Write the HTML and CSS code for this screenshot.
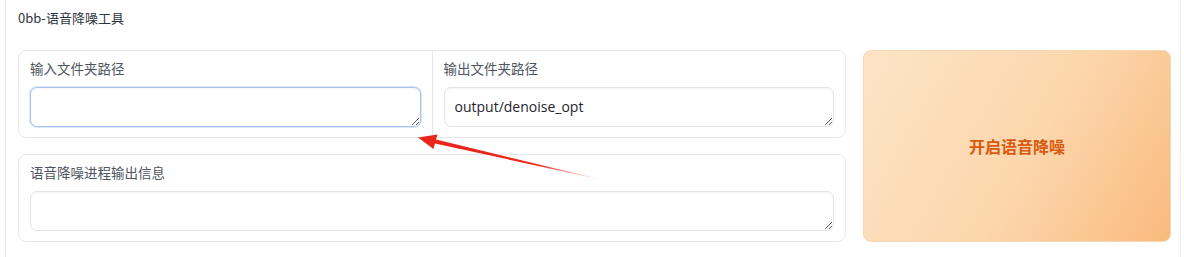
FILE: index.html
```html
<!DOCTYPE html>
<html lang="zh-CN">

<head>
    <meta charset="UTF-8">
    <meta name="viewport" content="width=device-width, initial-scale=1.0">
    <title>0bb-语音降噪工具</title>

    <link rel="stylesheet" href="styles.css">
</head>

<body>
    <div class="panel">
        <div class="title">0bb-语音降噪工具</div>

        <div class="row">
            <div class="fields">
                <!-- 输入 / 输出 两栏 -->
                <div class="group split">
                    <label class="cell">
                        <span class="label">输入文件夹路径</span>
                        <textarea class="box focus" rows="1"></textarea>
                    </label>
                    <label class="cell">
                        <span class="label">输出文件夹路径</span>
                        <textarea class="box" rows="1">output/denoise_opt</textarea>
                    </label>
                </div>

                <!-- 进程输出 -->
                <div class="group">
                    <label class="cell">
                        <span class="label">语音降噪进程输出信息</span>
                        <textarea class="box" rows="1"></textarea>
                    </label>
                </div>
            </div>

            <button class="run">开启语音降噪</button>
        </div>
    </div>

    <!-- 标注箭头 -->
    <svg class="arrow" width="1184" height="257" viewBox="0 0 1184 257">
        <defs>
            <linearGradient id="fade" x1="600" y1="180" x2="418" y2="138" gradientUnits="userSpaceOnUse">
                <stop offset="0" stop-color="#f0402f" stop-opacity="0.2" />
                <stop offset="0.35" stop-color="#ea2a1d" />
                <stop offset="1" stop-color="#e8261a" />
            </linearGradient>
        </defs>
        <polygon points="603,180 436,139.6 437.5,134.5 418,137.5 433.5,149 435,143.6" fill="url(#fade)" />
    </svg>
</body>

</html>
```

FILE: styles.css
```css
* {
    box-sizing: border-box;
}

body {
    margin: 0;
    background: #fff;
    font-family: "Noto Sans CJK SC", "Noto Sans", sans-serif;
    color: #374151;
}

/* 外框 只有左右两条线 */
.panel {
    margin: 0 3px 0 5px;
    height: 257px;
    border-left: 1px solid #e8e8ea;
    border-right: 1px solid #f0f0f2;
    padding: 8px 8px 0 12px;
}

.title {
    font-size: 13px;
    line-height: 20px;
    color: #2f3540;
}

.row {
    display: flex;
    gap: 17px;
    margin-top: 22px;
}

.fields {
    width: 828px;
    display: flex;
    flex-direction: column;
    gap: 16px;
}

.group {
    border: 1px solid #e6e7ea;
    border-radius: 8px;
    display: flex;
    background: #fff;
}

.split .cell + .cell {
    border-left: 1px solid #e6e7ea;
}

.cell {
    flex: 1;
    display: flex;
    flex-direction: column;
    padding: 7px 11px 10px 11px;
}

.label {
    font-size: 13.5px;
    line-height: 20px;
    color: #4e5561;
    margin-bottom: 9px;
}

.box {
    display: block;
    width: 100%;
    height: 40px;
    border: 1px solid #e3e4e8;
    border-radius: 7px;
    padding: 8px 10px;
    font-family: "Open Sans", "Noto Sans", sans-serif;
    font-size: 14px;
    line-height: 22px;
    color: #1f2530;
    background: #fff;
    box-shadow: inset 0 1px 2px rgba(0, 0, 0, .05);
    resize: vertical;
    outline: none;
}

.box.focus {
    border-color: #a8c3ec;
    box-shadow: 0 0 0 1px #dbe7f8, inset 0 1px 2px rgba(0, 0, 0, .04);
}

.run {
    width: 308px;
    height: 192px;
    border: 1px solid #f6d7b4;
    border-radius: 8px;
    background: linear-gradient(120deg, #fde4c6 0%, #fcd6ac 55%, #f9ba7d 100%);
    color: #d8590f;
    font-family: "Noto Sans CJK SC", sans-serif;
    font-size: 16px;
    font-weight: 700;
    cursor: pointer;
}

.arrow {
    position: absolute;
    left: 0;
    top: 0;
    pointer-events: none;
}
```
